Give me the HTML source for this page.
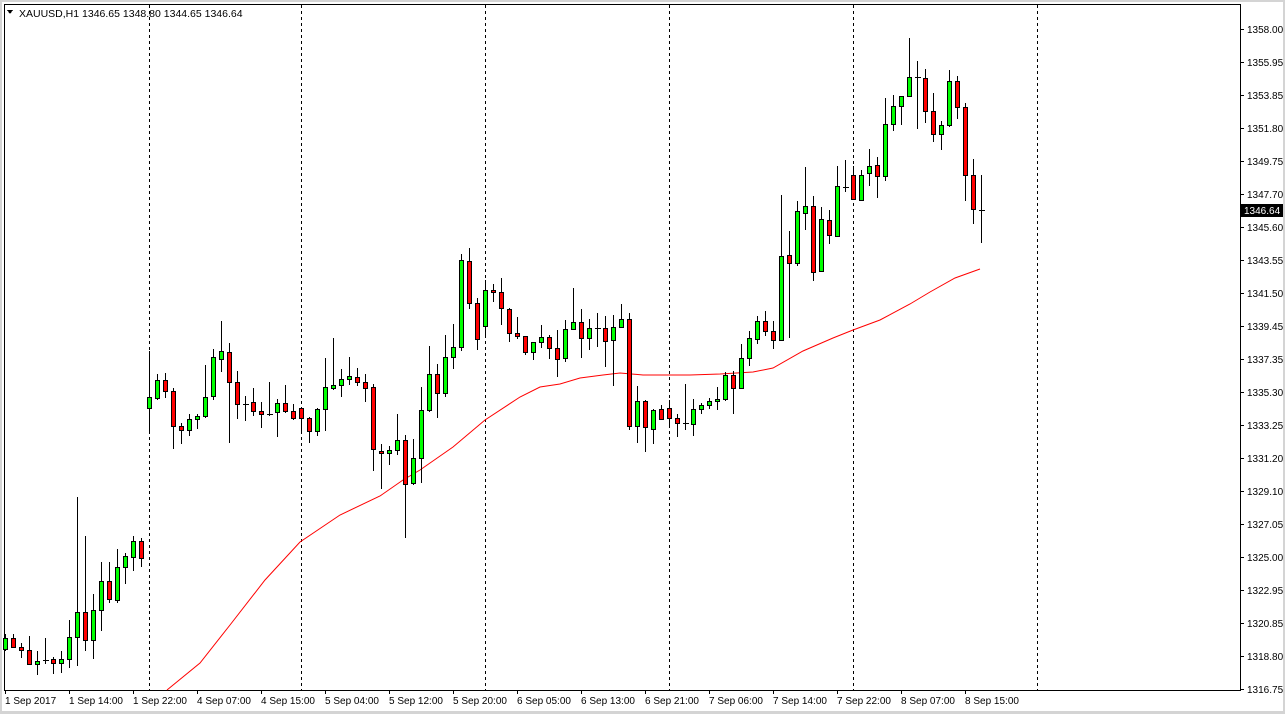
<!DOCTYPE html>
<html><head><meta charset="utf-8">
<style>
html,body{margin:0;padding:0;background:#fff;}
body{width:1285px;height:714px;overflow:hidden;position:relative;font-family:"Liberation Sans",Tahoma,sans-serif;}
svg{position:absolute;left:0;top:0;}
text{font-family:"Liberation Sans",Tahoma,sans-serif;font-size:10px;fill:#000;}
</style></head><body>
<svg id="s" width="1285" height="714" xmlns="http://www.w3.org/2000/svg" shape-rendering="crispEdges">
<rect x="0" y="0" width="1285" height="714" fill="#fff"/>
<rect x="0" y="0" width="1285" height="2" fill="#d4d4d4"/>
<rect x="0" y="0" width="2" height="714" fill="#d4d4d4"/>
<rect x="1283" y="0" width="2" height="714" fill="#d4d4d4"/>
<rect x="0" y="711" width="1285" height="3" fill="#d4d4d4"/>
<rect x="4.5" y="4.5" width="1236" height="686" fill="none" stroke="#000" stroke-width="1"/>
<g id="grid" stroke="#000" stroke-width="1" stroke-dasharray="3,3"></g>
<g id="ma"></g>
<g id="c"></g>
<g id="ax"></g>
<polygon points="7,10 13,10 10,14" fill="#000"/>
<text x="19" y="17" style="font-size:10.5px">XAUUSD,H1  1346.65 1348.80 1344.65 1346.64</text>
<rect x="1241" y="204" width="42" height="13" fill="#000"/>
<text x="1244" y="214" style="fill:#fff">1346.64</text>
</svg>
<script>
var NS="http://www.w3.org/2000/svg";
function el(p,t,a,txt){var e=document.createElementNS(NS,t);for(var k in a)e.setAttribute(k,a[k]);if(txt!==undefined)e.textContent=txt;p.appendChild(e);return e;}
var g=document.getElementById('grid');
[149,301,485,669,853,1037].forEach(function(x){el(g,'line',{x1:x+.5,y1:5,x2:x+.5,y2:690});});
var ax=document.getElementById('ax');
var prices=["1358.00","1355.95","1353.85","1351.80","1349.75","1347.70","1345.60","1343.55","1341.50","1339.45","1337.35","1335.30","1333.25","1331.20","1329.10","1327.05","1325.00","1322.95","1320.85","1318.80","1316.75"];
prices.forEach(function(p,i){var y=29+i*33;el(ax,'line',{x1:1241,y1:y+.5,x2:1244,y2:y+.5,stroke:'#000'});el(ax,'text',{x:1247,y:y+4},p);});
var times=["1 Sep 2017","1 Sep 14:00","1 Sep 22:00","4 Sep 07:00","4 Sep 15:00","5 Sep 04:00","5 Sep 12:00","5 Sep 20:00","6 Sep 05:00","6 Sep 13:00","6 Sep 21:00","7 Sep 06:00","7 Sep 14:00","7 Sep 22:00","8 Sep 07:00","8 Sep 15:00"];
times.forEach(function(t,i){var x=5+i*64;el(ax,'line',{x1:x+.5,y1:690,x2:x+.5,y2:694,stroke:'#000'});el(ax,'text',{x:x,y:704},t);});
var D=[
[638,649,634,650,'g'],[638,647,634,647,'r'],[647,650,643,657,'r'],[650,664,636,664,'r'],[661,664,651,674,'g'],[660,662,638,663,'d'],[659,663,657,673,'r'],[659,663,651,672,'g'],[637,659,620,667,'g'],[612,637,497,665,'g'],
[612,640,536,650,'r'],[610,640,594,658,'g'],[581,610,562,630,'g'],[581,599,562,602,'r'],[567,600,549,602,'g'],[556,567,553,583,'g'],[541,557,536,570,'g'],[541,558,538,566,'r'],[397,408,351,432,'g'],[380,398,374,399,'g'],
[380,391,373,397,'r'],[391,426,388,448,'r'],[426,430,423,443,'r'],[419,430,414,435,'g'],[416,419,414,428,'g'],[397,416,365,417,'g'],[357,396,349,399,'g'],[351,359,321,371,'g'],[352,382,343,442,'r'],[382,404,371,418,'r'],
[404,404,396,420,'d'],[402,411,388,415,'r'],[411,414,402,427,'r'],[414,414,382,415,'d'],[403,412,399,436,'g'],[403,411,385,412,'r'],[411,418,404,419,'r'],[408,418,408,432,'r'],[418,431,417,442,'r'],[409,431,408,435,'g'],
[387,409,358,430,'g'],[385,388,338,389,'g'],[379,385,369,396,'g'],[376,379,357,384,'g'],[377,382,368,385,'r'],[382,388,374,401,'r'],[387,449,384,470,'r'],[451,453,444,488,'r'],[450,453,446,464,'g'],[440,450,414,454,'g'],
[440,484,435,537,'r'],[458,483,439,484,'g'],[410,458,387,482,'g'],[374,410,346,411,'g'],[374,393,364,417,'r'],[357,393,335,396,'g'],[347,357,324,368,'g'],[260,347,254,350,'g'],[261,303,248,308,'r'],[303,339,298,349,'r'],
[290,326,280,336,'g'],[290,292,284,301,'r'],[292,308,278,324,'r'],[309,333,308,341,'r'],[333,336,317,338,'r'],[336,352,336,354,'r'],[342,352,342,359,'g'],[337,342,325,347,'g'],[337,348,335,358,'r'],[348,359,330,376,'r'],
[329,358,320,361,'g'],[322,329,288,329,'g'],[322,338,309,357,'r'],[328,338,319,349,'g'],[328,328,313,346,'d'],[328,341,316,366,'r'],[327,340,315,385,'g'],[319,327,304,327,'g'],[319,426,313,429,'r'],[401,426,386,442,'g'],
[401,427,400,451,'r'],[410,429,409,443,'g'],[409,419,405,419,'r'],[408,418,400,426,'r'],[418,423,414,436,'r'],[423,423,384,429,'d'],[409,424,399,435,'g'],[405,409,403,413,'g'],[401,405,398,408,'g'],[399,401,387,409,'g'],
[375,399,372,400,'g'],[375,388,371,413,'r'],[358,388,344,388,'g'],[338,358,331,365,'g'],[321,339,316,343,'g'],[321,331,311,335,'r'],[331,340,321,348,'r'],[256,340,195,340,'g'],[255,263,231,337,'r'],[211,263,201,265,'g'],
[206,213,167,229,'g'],[206,272,196,280,'r'],[219,271,207,271,'g'],[220,235,210,243,'r'],[186,236,166,236,'g'],[187,187,160,191,'d'],[175,199,166,199,'r'],[175,200,170,200,'g'],[166,173,149,185,'g'],[165,176,157,197,'r'],
[124,176,98,180,'g'],[106,124,95,130,'g'],[96,106,96,124,'g'],[77,96,38,96,'g'],[77,77,61,128,'d'],[78,111,69,122,'r'],[111,134,93,141,'r'],[125,134,121,149,'g'],[81,125,70,126,'g'],[81,107,76,118,'r'],
[107,175,103,200,'r'],[175,209,159,223,'r'],[210,210,175,242,'d']
];
var c=document.getElementById('c');
D.forEach(function(d,k){var x=5+8*k;
 el(c,'line',{x1:x+.5,y1:d[2],x2:x+.5,y2:d[3]+1,stroke:'#000'});
 if(d[4]=='d'){el(c,'line',{x1:x-2,y1:d[0]+.5,x2:x+4,y2:d[0]+.5,stroke:'#000'});}
 else{el(c,'rect',{x:x-1.5,y:d[0]+.5,width:4,height:Math.max(1,d[1]-d[0]),fill:d[4]=='g'?'#00ff00':'#ff0000',stroke:'#000'});}
});
var ma=document.getElementById('ma');
el(ma,'polyline',{points:"167,690 200,663 230,625 265,580 300,542 340,515 380,496 403,480 420,470 453,447 485,420 520,397 540,387 560,384 580,378 603,375 620,373 643,375 690,375 720,374 753,372 773,368 803,351 833,338 853,330 880,320 910,304 930,292 955,278 980,269",fill:'none',stroke:'#ff0000','stroke-width':1,'shape-rendering':'auto'});
</script>
</body></html>
